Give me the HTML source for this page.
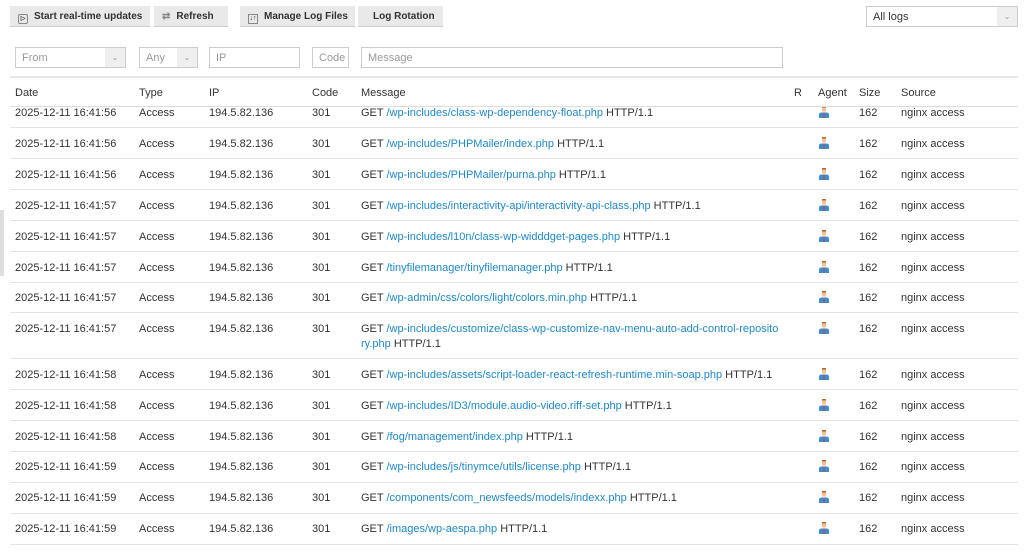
<!DOCTYPE html><html><head><meta charset="utf-8"><style>
*{box-sizing:border-box;margin:0;padding:0}
body{width:1024px;height:560px;overflow:hidden;background:#fff;font-family:"Liberation Sans",sans-serif;font-size:11px;color:#333;position:relative}
.btn{position:absolute;top:6px;height:21px;background:#e9e9e9;border-bottom:1px solid #ccc;font-size:10px;font-weight:bold;color:#333;line-height:22px;padding-left:8px}
.in{position:absolute;top:47px;height:21px;border:1px solid #ccc;background:#fff;color:#999;font-size:11px;line-height:20px;padding-left:6px}
.dd{position:absolute;top:0;right:0;width:20px;height:100%;background:#efefef;color:#999;text-align:center;font-size:8px}
.t{position:absolute;white-space:nowrap;line-height:14px}
.ln{position:absolute;left:10px;width:1008px;height:1px;background:#e4e4e4}
a{color:#1e88c7;text-decoration:none}
.ag{position:absolute;width:10px;height:12px}
</style></head><body>
<div class="btn" style="left:10px;width:140px"><span style="display:inline-block;width:10px;height:10px;border:1px solid #888;border-radius:2px;vertical-align:-1px;margin-right:6px;font-size:6px;line-height:8px;text-align:center">▷</span>Start real-time updates</div>
<div class="btn" style="left:154px;width:74px"><span style="color:#888;margin-right:6px">⇄</span>Refresh</div>
<div class="btn" style="left:240px;width:115px"><span style="display:inline-block;width:10px;height:10px;border:1px solid #888;vertical-align:-1px;margin-right:6px;font-size:7px;line-height:8px;text-align:center">↓↑</span>Manage Log Files</div>
<div class="btn" style="left:358px;width:85px;padding-left:15px">Log Rotation</div>
<div class="in" style="left:866px;top:6px;width:152px;height:21px;color:#333">All logs<div class="dd">⌄</div></div>
<div class="in" style="left:15px;width:111px">From<div class="dd">⌄</div></div>
<div class="in" style="left:139px;width:59px">Any<div class="dd">⌄</div></div>
<div class="in" style="left:209px;width:91px">IP</div>
<div class="in" style="left:312px;width:37px">Code</div>
<div class="in" style="left:361px;width:422px">Message</div>
<div class="ln" style="top:76px;height:2px;background:#e8e8e8"></div>
<div style="position:absolute;left:0;top:210px;width:4px;height:66px;background:#ddd"></div>
<div id="rows"></div>
<div style="position:absolute;left:0;top:80px;width:1024px;height:26px;background:#fff"></div>
<div class="ln" style="top:106px;background:#ddd"></div>
<div class="t" style="left:15px;top:86px">Date</div><div class="t" style="left:139px;top:86px">Type</div><div class="t" style="left:209px;top:86px">IP</div><div class="t" style="left:312px;top:86px">Code</div><div class="t" style="left:361px;top:86px">Message</div><div class="t" style="left:794px;top:86px">R</div><div class="t" style="left:818px;top:86px">Agent</div><div class="t" style="left:859px;top:86px">Size</div><div class="t" style="left:901px;top:86px">Source</div>
<script>
var d=[["56","/wp-includes/class-wp-dependency-float.php",112],["56","/wp-includes/PHPMailer/index.php",143],["56","/wp-includes/PHPMailer/purna.php",174],["57","/wp-includes/interactivity-api/interactivity-api-class.php",205],["57","/wp-includes/l10n/class-wp-widddget-pages.php",236],["57","/tinyfilemanager/tinyfilemanager.php",267],["57","/wp-admin/css/colors/light/colors.min.php",297],["57","/wp-includes/customize/class-wp-customize-nav-menu-auto-add-control-reposito<br>ry.php",328],["58","/wp-includes/assets/script-loader-react-refresh-runtime.min-soap.php",374],["58","/wp-includes/ID3/module.audio-video.riff-set.php",405],["58","/fog/management/index.php",436],["59","/wp-includes/js/tinymce/utils/license.php",466],["59","/components/com_newsfeeds/models/indexx.php",497],["59","/images/wp-aespa.php",528]];
var lines=[127,158,189,220,251,282,312,358,389,420,451,482,513,544];
var h="";d.forEach(function(r,i){var y=r[2]-6;
h+='<div class="t" style="left:15px;top:'+y+'px">2025-12-11 16:41:'+r[0]+'</div><div class="t" style="left:139px;top:'+y+'px">Access</div><div class="t" style="left:209px;top:'+y+'px">194.5.82.136</div><div class="t" style="left:312px;top:'+y+'px">301</div><div class="t" style="left:361px;top:'+y+'px;line-height:15px">GET <a>'+r[1].split('<br>').join('</a><br><a>')+'</a> HTTP/1.1</div><svg class="ag" style="left:819px;top:'+y+'px" viewBox="0 0 10 12"><rect x="3" y="0" width="4" height="2" fill="#b5651d"/><rect x="3" y="1.5" width="4" height="4" fill="#f4c29a"/><path d="M0 12V8.5Q0 6.5 3 6.5H7Q10 6.5 10 8.5V12Z" fill="#3a8fd0"/><rect x="4.5" y="6.5" width="1" height="5.5" fill="#d33"/></svg><div class="t" style="left:859px;top:'+y+'px">162</div><div class="t" style="left:901px;top:'+y+'px">nginx access</div><div class="ln" style="top:'+lines[i]+'px"></div>';});
document.getElementById("rows").innerHTML=h;
</script>
</body></html>
